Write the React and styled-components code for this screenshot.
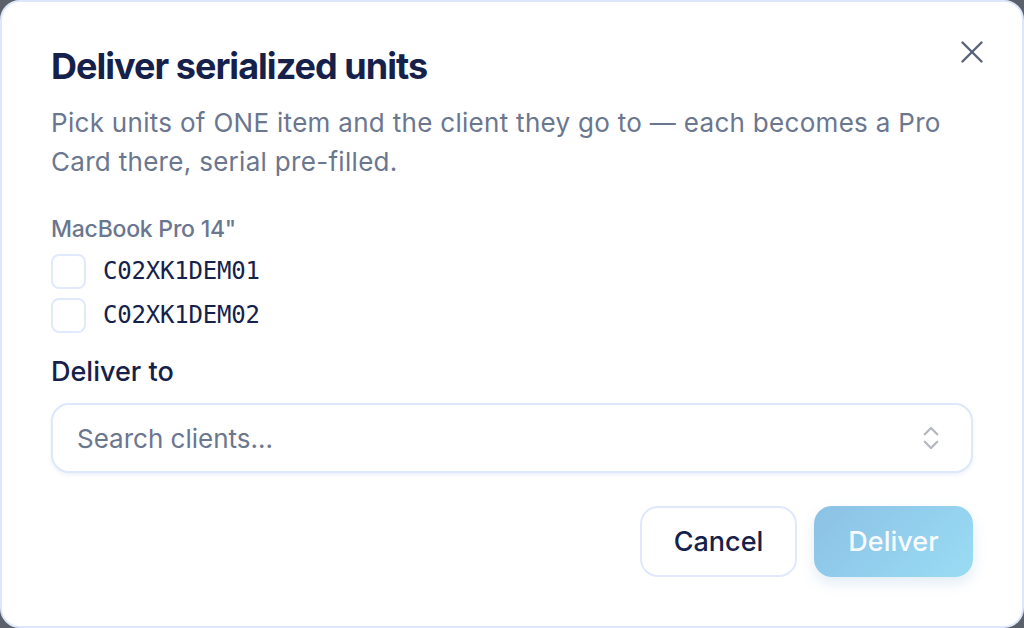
import React from "react";
import styled, { createGlobalStyle } from "styled-components";

const Global = createGlobalStyle`
  html, body { margin: 0; padding: 0; background: #5c606b; }
  body { font-family: Inter, "Noto Sans", sans-serif; -webkit-font-smoothing: antialiased; }
  * { box-sizing: border-box; }
`;

const Dialog = styled.div`
  position: relative;
  width: 1024px;
  height: 628px;
  background: #ffffff;
  border: 2px solid #dce7fb;
  border-radius: 20px;
  padding: 43px 49px 49px 49px;
  display: flex;
  flex-direction: column;
`;

const CloseButton = styled.button`
  position: absolute;
  top: 36px;
  right: 36px;
  width: 28px;
  height: 28px;
  padding: 0;
  border: 0;
  background: transparent;
  display: flex;
  align-items: center;
  justify-content: center;
  color: #596278;
  cursor: pointer;
`;

const Title = styled.h2`
  margin: 0;
  font-size: 36px;
  line-height: 1.2;
  font-weight: 700;
  letter-spacing: -0.027em;
  color: #15214a;
`;

const Description = styled.p`
  margin: 15px 0 0 0;
  font-size: 26px;
  line-height: 39px;
  font-weight: 400;
  letter-spacing: 0.3px;
  color: #6b768f;
  max-width: 920px;
`;

const GroupLabel = styled.div`
  margin-top: 32px;
  font-size: 23px;
  line-height: 33px;
  font-weight: 500;
  color: #6b768f;
  letter-spacing: -0.01em;
`;

const UnitList = styled.div`
  margin-top: 8px;
  display: flex;
  flex-direction: column;
  gap: 9px;
`;

const UnitRow = styled.label`
  display: flex;
  align-items: center;
  gap: 17px;
  cursor: pointer;
`;

const Box = styled.span`
  width: 35px;
  height: 35px;
  border: 2px solid #e1e9fc;
  border-radius: 8px;
  background: #fff;
  flex-shrink: 0;
`;

const Serial = styled.span`
  font-family: "DejaVu Sans Mono", "Liberation Mono", monospace;
  font-size: 24px;
  letter-spacing: -0.2px;
  color: #15214a;
  line-height: 35px;
`;

const FieldLabel = styled.div`
  margin-top: 22px;
  font-size: 27px;
  line-height: 34px;
  font-weight: 500;
  color: #15214a;
  letter-spacing: 0;
`;

const Select = styled.div`
  margin-top: 14px;
  height: 70px;
  border: 2px solid #dde8fb;
  border-radius: 18px;
  background: #fff;
  box-shadow: 0 2px 4px rgba(150, 175, 220, 0.18);
  display: flex;
  align-items: center;
  justify-content: space-between;
  padding: 0 25px 0 24px;
`;

const Placeholder = styled.span`
  font-size: 26px;
  color: #6b768f;
  letter-spacing: 0;
`;

const Footer = styled.div`
  margin-top: auto;
  display: flex;
  justify-content: flex-end;
  gap: 17px;
`;

const Button = styled.button`
  height: 71px;
  border-radius: 18px;
  font-family: Inter, "Noto Sans", sans-serif;
  font-size: 27px;
  font-weight: 500;
  letter-spacing: 0;
  padding: 0 20px;
  cursor: pointer;
`;

const CancelButton = styled(Button)`
  width: 157px;
  background: #fff;
  border: 2px solid #e0e9fc;
  color: #15214a;
`;

const DeliverButton = styled(Button)`
  width: 159px;
  border: 0;
  color: rgba(255, 255, 255, 0.95);
  background: linear-gradient(135deg, #8cc1e3 0%, #93d0ee 55%, #9adcf4 100%);
  box-shadow: 0 6px 14px rgba(120, 170, 210, 0.22);
`;

export default function App() {
  return (
    <>
      <Global />
      <Dialog role="dialog">
        <CloseButton aria-label="Close">
          <svg width="22" height="22" viewBox="0 0 22 22" fill="none" stroke="currentColor" strokeWidth="2.4" strokeLinecap="round">
            <path d="M1.5 1.5 20.5 20.5" />
            <path d="M20.5 1.5 1.5 20.5" />
          </svg>
        </CloseButton>
        <Title>Deliver serialized units</Title>
        <Description>
          Pick units of ONE item and the client they go to — each becomes a Pro Card there, serial pre-filled.
        </Description>
        <GroupLabel>MacBook Pro 14"</GroupLabel>
        <UnitList>
          <UnitRow>
            <Box />
            <Serial>C02XK1DEM01</Serial>
          </UnitRow>
          <UnitRow>
            <Box />
            <Serial>C02XK1DEM02</Serial>
          </UnitRow>
        </UnitList>
        <FieldLabel>Deliver to</FieldLabel>
        <Select>
          <Placeholder>Search clients…</Placeholder>
          <svg width="30" height="30" viewBox="0 0 24 24" fill="none" stroke="#b4b7be" strokeWidth="1.8" strokeLinecap="round" strokeLinejoin="round">
            <path d="m7 15 5 5 5-5" />
            <path d="m7 9 5-5 5 5" />
          </svg>
        </Select>
        <Footer>
          <CancelButton>Cancel</CancelButton>
          <DeliverButton>Deliver</DeliverButton>
        </Footer>
      </Dialog>
    </>
  );
}
